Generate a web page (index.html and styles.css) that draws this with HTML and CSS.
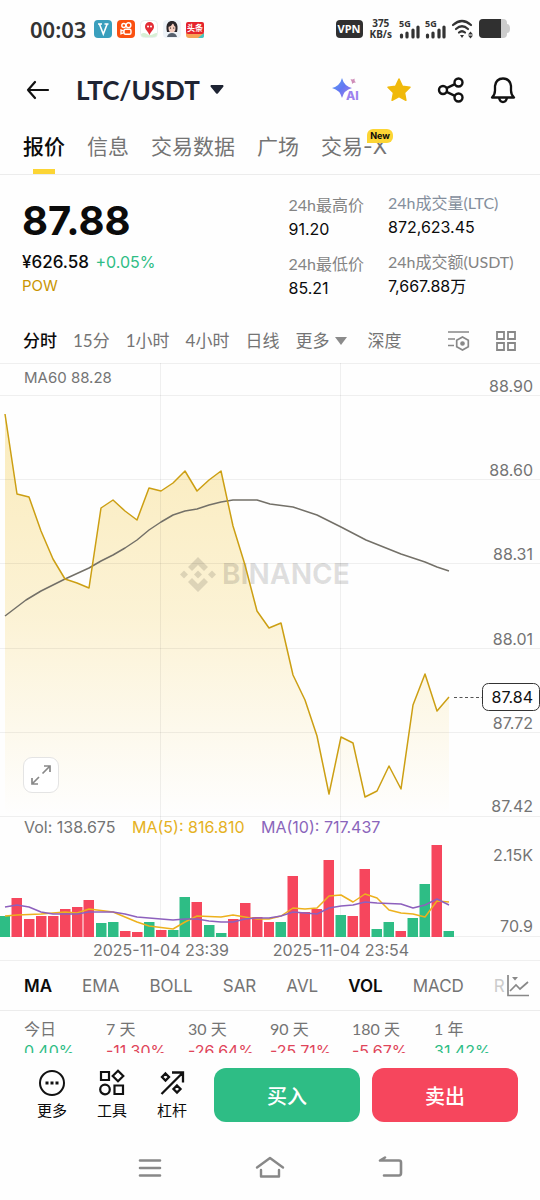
FILE: index.html
```html
<!DOCTYPE html>
<html lang="zh-CN">
<head>
<meta charset="utf-8">
<meta name="viewport" content="width=device-width, initial-scale=1">
<title>LTC/USDT</title>
<link rel="stylesheet" href="styles.css">
</head>
<body>
<div class="status">
  <span class="clock">00:03</span>
  <svg class="app" viewBox="0 0 18 18"><rect width="18" height="18" rx="4" fill="#3a9fbd"/><path d="M4 4h4M10.500 4h4M5.500 4.300l3.800 9.700 3.800-9.700" fill="none" stroke="#fff" stroke-width="1.600"/></svg>
  <svg class="app" viewBox="0 0 18 18"><rect width="18" height="18" rx="4" fill="#fa5010"/><g fill="none" stroke="#fff" stroke-width="1.400"><circle cx="6.800" cy="5.500" r="2"/><circle cx="11.500" cy="5.200" r="2.400"/><rect x="7" y="9.300" width="7" height="5" rx="1.500"/><path d="M7 11.200l-3-1.200v3.800l3-1.200"/></g></svg>
  <svg class="app" viewBox="0 0 18 18"><rect x=".5" y=".5" width="17" height="17" rx="4" fill="#fff" stroke="#e9eeee"/><path d="M1 14c4-3 6 1 9 1s4-2 7-2v1a3 3 0 0 1-3 3H4a3 3 0 0 1-3-3z" fill="#d7efd5"/><path d="M9.500 15C8 11 5 10 5 6.500a4.500 4.500 0 0 1 9 0C14 10 11 11 9.500 15z" fill="#e32d36"/><circle cx="8" cy="6.500" r="1" fill="#fff"/><circle cx="11" cy="6.500" r="1" fill="#fff"/></svg>
  <svg class="app" viewBox="0 0 18 18"><rect width="18" height="18" rx="4" fill="#eef3f8"/><path d="M4 12C2 3 6 1 9 1s7 2 5 11z" fill="#29262b"/><ellipse cx="9" cy="8" rx="3.500" ry="4.500" fill="#f4cdbf"/><path d="M5.300 7Q9 6 10 3q1 3 2.700 4V4L9 2 5.300 4z" fill="#29262b"/><path d="M4 17q1-4 5-4t5 4z" fill="#57606d"/><circle cx="7.500" cy="8" r=".6"/><circle cx="10.700" cy="8" r=".6"/></svg>
  <svg class="app" viewBox="0 0 18 18"><rect width="18" height="18" rx="3" fill="#fff"/><path d="M0 13h18v2a3 3 0 0 1-3 3H3a3 3 0 0 1-3-3z" fill="#f6a257"/><path d="M12 18l6-5v3a2 2 0 0 1-2 2z" fill="#43c6c5"/><rect y="2" width="18" height="12" rx="2" fill="#e5242c"/><text x="9" y="11" class="news">头条</text></svg>
  <span class="vpn">VPN</span>
  <span class="speed"><span>375</span><span>KB/s</span></span>
  <svg class="signal" viewBox="0 0 21 20"><text x="0" y="8" class="five">5G</text><path d="M2.500 18v-2M8 18v-4M14 18v-7M19 18V8" stroke="#333" stroke-width="3.200" stroke-linecap="round"/></svg>
  <svg class="signal" viewBox="0 0 21 20"><text x="0" y="8" class="five">5G</text><path d="M2.500 18v-2M8 18v-4M14 18v-7M19 18V8" stroke="#333" stroke-width="3.200" stroke-linecap="round"/></svg>
  <svg class="wifi" viewBox="0 0 23 20"><g fill="none" stroke="#333" stroke-width="2.200" stroke-linecap="round"><path d="M2 6q9-8 18 0M5 10q6-5.500 12 0M8 13.500q3-2.500 6 0"/></g><path d="M9 16h4l-2 3zM17 15.500h5L19.500 12.500zM17 16.500h5L19.500 19.500z" fill="#333"/></svg>
  <svg class="battery" viewBox="0 0 31 19"><path d="M4 0h20a4 4 0 0 1 4 4v1q3 0 3 4.500T28 14v1a4 4 0 0 1-4 4H4a4 4 0 0 1-4-4V4a4 4 0 0 1 4-4z" fill="#ccc"/><path d="M4 0h18v19H4a4 4 0 0 1-4-4V4a4 4 0 0 1 4-4z" fill="#303030"/></svg>
</div>

<header class="header">
  <button class="plain" aria-label="返回"><svg width="24" height="20" viewBox="0 0 24 20" fill="none" stroke="#111" stroke-width="2.200" stroke-linecap="round" stroke-linejoin="round"><path d="M9 2L2 10l7 8M2 10h20"/></svg></button>
  <button class="plain pair">LTC/USDT <svg width="14" height="9" viewBox="0 0 14 9"><path d="M1 0h12q1 1 .3 1.800L8 8.200q-1 1-2 0L.7 1.800Q0 1 1 0z" fill="#1e2433"/></svg></button>
  <div class="tools">
    <button class="plain" aria-label="AI"><svg width="28" height="26" viewBox="0 0 28 26"><defs><linearGradient id="ai" x1="0" x2="1" y1="0" y2="1"><stop stop-color="#5aa5f4"/><stop offset=".5" stop-color="#6277f2"/><stop offset="1" stop-color="#ae7de9"/></linearGradient></defs><path d="M10 1q2 8 10 10-8 2-10 10-2-8-10-10 8-2 10-10z" fill="url(#ai)"/><path d="M18.500 2q2 1 4-.5-.5 2 1.500 4-2.500-.5-4 1.500 0-2.500-1.500-5z" fill="#cf8db8"/><text x="14" y="23" class="ai-text">AI</text></svg></button>
    <button class="plain" aria-label="收藏"><svg width="26" height="26" viewBox="0 0 26 26"><path d="M13 2l3.400 7.200 7.600 1-5.500 5.400 1.400 7.700L13 19.600l-6.900 3.700 1.400-7.700L2 10.200l7.600-1z" fill="#f0b90b" stroke="#f0b90b" stroke-width="1.500" stroke-linejoin="round"/></svg></button>
    <button class="plain" aria-label="分享"><svg width="26" height="26" viewBox="0 0 26 26" fill="none" stroke="#111" stroke-width="2.400"><circle cx="5" cy="13" r="4"/><circle cx="20.500" cy="5.500" r="4"/><circle cx="20.500" cy="20.500" r="4"/><path d="M8.600 11.200l8.300-4M8.600 14.800l8.300 4"/></svg></button>
    <button class="plain" aria-label="提醒"><svg width="26" height="26" viewBox="0 0 26 26" fill="none" stroke="#111" stroke-width="2.300" stroke-linejoin="round"><path d="M2 20.500q3-3 3-7V9q1-7.500 8-7.500T21 9v4.500q0 4 3 7zM9 21q1 4 4 4t4-4"/></svg></button>
  </div>
</header>

<nav class="tabs">
  <a class="tab active" href="#quote">报价</a>
  <a class="tab" href="#info">信息</a>
  <a class="tab" href="#data">交易数据</a>
  <a class="tab" href="#square">广场</a>
  <a class="tab" href="#tradex">交易-X<span class="new">New</span></a>
</nav>

<main>
<section class="quote" id="quote">
  <div class="price-box">
    <div class="price">87.88</div>
    <div class="fiat">¥626.58 <span class="up">+0.05%</span></div>
    <div class="tag">POW</div>
  </div>
  <dl class="stats">
    <div><dt>24h最高价</dt><dd>91.20</dd></div>
    <div><dt>24h最低价</dt><dd>85.21</dd></div>
  </dl>
  <dl class="stats wide">
    <div><dt class="cool">24h成交量(LTC)</dt><dd>872,623.45</dd></div>
    <div><dt>24h成交额(USDT)</dt><dd>7,667.88万</dd></div>
  </dl>
</section>

<div class="frames">
  <button class="plain active">分时</button>
  <button class="plain">15分</button>
  <button class="plain">1小时</button>
  <button class="plain">4小时</button>
  <button class="plain">日线</button>
  <button class="plain more">更多 <svg width="12" height="8" viewBox="0 0 12 8"><path d="M0 0h12L6 8z" fill="#8b8b8b"/></svg></button>
  <button class="plain">深度</button>
  <div class="frame-tools">
    <button class="plain" aria-label="图表设置"><svg width="22" height="22" viewBox="0 0 22 22" fill="none" stroke="#888" stroke-width="1.700"><path d="M0 2h21M0 9h7M0 15.500h6M14.500 7l5.800 3.200v6.600L14.500 20l-5.800-3.200v-6.600z"/><circle cx="14.500" cy="13.500" r="1.500" fill="#888"/></svg></button>
    <button class="plain" aria-label="布局"><svg width="22" height="22" viewBox="0 0 22 22" fill="none" stroke="#888" stroke-width="1.800"><path d="M2 2h7v7H2zM13 2h7v7h-7zM2 13h7v7H2zM13 13h7v7h-7z"/></svg></button>
  </div>
</div>

<section class="chart-box">
<svg class="chart" viewBox="0 363 540 598" role="img" aria-label="LTC/USDT 分时图">
  <defs><linearGradient id="fill" gradientUnits="userSpaceOnUse" x1="0" y1="414" x2="0" y2="816"><stop stop-color="#f0b90b" stop-opacity=".27"/><stop offset=".5" stop-color="#f0b90b" stop-opacity=".17"/><stop offset="1" stop-color="#f0b90b" stop-opacity="0"/></linearGradient></defs>
  <path d="M5 414L17 494 29 497 41 531 53 559 65 579 77 583 89 588 101 508 113 500 125 511 137 520 149 488 161 491 173 483 185 471 197 491 209 480 221 471 233 526 245 565 257 611 269 628 281 623 293 675 305 700 317 736 329 794 341 737 353 743 365 797 377 791 389 766 401 789 413 705 425 674 437 711 449 697V816H5z" fill="url(#fill)"/>
  <path class="grid" d="M0 363.500H540M0 395.500H540M0 479.500H540M0 563.500H540M0 648.500H540M0 732.500H540M0 816.500H540M0 936.500H540M0 960.500H540M160.500 363V937M340.500 363V937"/>
  <g class="watermark"><path d="M198 557l10 10-4 4-6-6-6 6-4-4zM198 592l10-10-4-4-6 6-6-6-4 4zM184 570.500l4 4-4 4-4-4zM212 570.500l4 4-4 4-4-4zM198 570.500l4 4-4 4-4-4z"/><text x="222" y="584">BINANCE</text></g>
  <path class="ma60" d="M5 616L26 600 41 591 65 579 89 568 101 561 113 555 125 548 137 540 149 530 161 522 173 515 185 511 197 509 209 505 221 502 233 500 257 500 270 504 293 507 317 515 341 527 366 540 401 554 425 562 437 567 449 571"/>
  <path class="line" d="M5 414L17 494 29 497 41 531 53 559 65 579 77 583 89 588 101 508 113 500 125 511 137 520 149 488 161 491 173 483 185 471 197 491 209 480 221 471 233 526 245 565 257 611 269 628 281 623 293 675 305 700 317 736 329 794 341 737 353 743 365 797 377 791 389 766 401 789 413 705 425 674 437 711 449 697"/>
  <path d="M454 697.500H482" stroke="#555" stroke-dasharray="3 2.500"/>
  <text x="24" y="383" class="ma60-text">MA60 88.28</text>
  <g class="axis"><text x="533" y="392">88.90</text><text x="533" y="476">88.60</text><text x="533" y="560">88.31</text><text x="533" y="645">88.01</text><text x="533" y="729">87.72</text><text x="533" y="812">87.42</text><text x="533" y="861">2.15K</text><text x="533" y="932">70.9</text></g>
  <rect x="482.500" y="683.500" width="57" height="27" rx="6" fill="#fff" stroke="#333"/>
  <g class="axis last"><text x="533" y="703">87.84</text></g>
  <text x="24" y="833">Vol: 138.675</text>
  <text x="132" y="833" class="ma5-text">MA(5): 816.810</text>
  <text x="261" y="833" class="ma10-text">MA(10): 717.437</text>
  <path class="green" d="M0 937V916H10V937zM96 937V923h10.500V937zM108 937V922h10.500V937zM144 937V922h10.500V937zM168 937V930h10.500V937zM179.500 937V897h10.500V937zM204 937V925h10.500V937zM216 937V933h10.500V937zM275.500 937V922h10.500V937zM335.500 937V915h10.500V937zM371.500 937V929h10.500V937zM383.500 937V922h10.500V937zM407.500 937V918h10.500V937zM419.500 937V884h10.500V937zM443.500 937V931h10.500V937z"/>
  <path class="red" d="M11.500 937V898H22V937zM24 937V919h10.500V937zM36 937V916h10.500V937zM48 937V916h10.500V937zM60 937V909h10.500V937zM72 937V907h10.500V937zM83.500 937V900H94V937zM120 937V931h10.500V937zM132 937V932h10.500V937zM156 937V930h10.500V937zM191.500 937V902H202V937zM228 937V919h10.500V937zM240 937V903h10.500V937zM252 937V917h10.500V937zM264 937V922h10V937zM287.500 937V876h10.500V937zM299.500 937V912h10.500V937zM311.500 937V909h10.500V937zM323.500 937V860h10.500V937zM347.500 937V916h10.500V937zM359.500 937V869h10.500V937zM395.500 937V931h10.500V937zM431.500 937V845h10.500V937z"/>
  <path class="ma5" d="M5 916L17 915 41 914 65 912 77 913 89 909 113 912 125 917 137 922 149 926 173 929 185 922 197 916 221 917 233 915 245 917 257 919 269 919 281 916 293 908 305 909 317 908 329 896 341 895 353 902 365 894 377 898 389 910 401 913 413 914 425 917 437 901 449 902"/>
  <path class="ma10" d="M5 907L17 905 29 907 41 912 53 914 77 914 89 912 113 912 125 914 137 917 149 918 173 920 185 919 197 919 209 921 221 922 233 922 245 919 257 918 269 918 281 916 293 912 317 914 329 908 341 906 353 905 365 902 377 903 401 904 413 908 425 905 437 899 449 905"/>
  <g class="time"><text x="161" y="956">2025-11-04 23:39</text><text x="341" y="956">2025-11-04 23:54</text></g>
</svg>
<button class="expand" aria-label="全屏"><svg width="22" height="22" viewBox="0 0 22 22" fill="none" stroke="#888" stroke-width="1.700"><path d="M12.500 9.500L20 2M14 2h6v6M9 13l-7 7M2 14v6h6"/></svg></button>
</section>

<div class="indicators">
  <button class="plain active">MA</button>
  <button class="plain">EMA</button>
  <button class="plain">BOLL</button>
  <button class="plain">SAR</button>
  <button class="plain">AVL</button>
  <span class="divider"></span>
  <button class="plain active">VOL</button>
  <button class="plain">MACD</button>
  <button class="plain faded">R</button>
  <button class="plain end" aria-label="指标"><svg width="22" height="22" viewBox="0 0 22 22" fill="none" stroke="#888" stroke-width="1.700"><path d="M1 0v20.500h21M3 16l6-6 4 4 8-7"/><path d="M5 2h6L8 5.500z" fill="#888" stroke="none"/></svg></button>
</div>

<dl class="performance">
  <div><dt>今日</dt><dd class="up">0.40%</dd></div>
  <div><dt>7 天</dt><dd>-11.30%</dd></div>
  <div><dt>30 天</dt><dd>-26.64%</dd></div>
  <div><dt>90 天</dt><dd>-25.71%</dd></div>
  <div><dt>180 天</dt><dd>-5.67%</dd></div>
  <div><dt>1 年</dt><dd class="up">31.42%</dd></div>
</dl>
</main>

<footer class="actions">
  <button class="plain action"><svg width="28" height="28" viewBox="0 0 28 28" fill="none" stroke="#111" stroke-width="2"><circle cx="14" cy="14" r="12"/><path d="M7.500 14h3M12.500 14h3M17.500 14h3" stroke-width="3"/></svg>更多</button>
  <button class="plain action"><svg width="28" height="28" viewBox="0 0 28 28" fill="none" stroke="#111" stroke-width="2.200"><path d="M3 3h8v8H3zM20 1.700L25.300 7 20 12.300 14.700 7zM16.500 16.500h8.500V25h-8.500z"/><circle cx="7" cy="20.500" r="4.800"/></svg>工具</button>
  <button class="plain action"><svg width="28" height="28" viewBox="0 0 28 28" fill="none" stroke="#111" stroke-width="2.300"><path d="M3.500 25L24.500 4M14 3.500h11v10M7.500 4.500L11 8l-3.500 3.500L4 8zM19 16.500l3.500 3.500-3.500 3.500-3.500-3.500z"/></svg>杠杆</button>
  <button class="trade buy">买入</button>
  <button class="trade sell">卖出</button>
</footer>
<div class="system">
  <button class="plain" aria-label="最近任务"><svg width="26" height="24" viewBox="0 0 26 24" stroke="#888" stroke-width="2.600" stroke-linecap="round"><path d="M3 4.500h20M3 12h20M3 19.500h20"/></svg></button>
  <button class="plain" aria-label="主屏幕"><svg width="30" height="24" viewBox="0 0 30 24" fill="none" stroke="#888" stroke-width="2.400" stroke-linecap="round" stroke-linejoin="round"><path d="M2 11.500L15 2l13 9.500M6 14v6.500h18V14"/></svg></button>
  <button class="plain" aria-label="后退"><svg width="26" height="24" viewBox="0 0 26 24" fill="none" stroke="#888" stroke-width="2.600" stroke-linecap="round" stroke-linejoin="round"><path d="M8 1.500L3 4.500h19q2 0 2 2V17q0 2.500-2 2.500H7"/></svg></button>
</div>
</body>
</html>
```
FILE: styles.css
```css
* { box-sizing: border-box; }
body { margin: 0; background: #fefefe; color: #0b0b0b; font-family: Inter, "Noto Sans CJK SC", sans-serif; font-size: 16px; line-height: 20px; }
svg { display: block; flex: none; overflow: visible; }
dl, dd { margin: 0; }
.plain { display: flex; align-items: center; padding: 0; border: 0; background: none; color: inherit; font: inherit; cursor: pointer; white-space: nowrap; }
.up { color: #2ebd85; }

.status { display: flex; align-items: center; gap: 5px; height: 57px; padding: 0 30px; color: #333; }
.clock { margin-right: 3px; font: 600 22px/24px "Noto Sans", sans-serif; }
.app { width: 18px; height: 18px; }
.news { fill: #fff; font: 700 8px "Noto Sans CJK SC", sans-serif; text-anchor: middle; }
.vpn { margin-left: auto; padding: 0 2px; border-radius: 4px; background: #303030; color: #fff; font: 700 11px/18px "Noto Sans", sans-serif; }
.speed { display: flex; flex-direction: column; align-items: center; margin: 0 2px; font: 700 10px/11px "Noto Sans", sans-serif; }
.signal { width: 21px; height: 20px; }
.five { fill: #333; font: 700 9px "Noto Sans", sans-serif; }
.wifi { width: 23px; height: 20px; }
.battery { width: 31px; height: 19px; }

.header { display: flex; align-items: center; gap: 26px; height: 65px; padding: 0 24px 0 26px; }
.pair { gap: 10px; color: #1e2433; font-family: Lato, sans-serif; font-size: 26px; font-weight: 700; line-height: 32px; }
.tools { display: flex; gap: 26px; margin-left: auto; }
.ai-text { fill: #9c82ee; font: 800 12px Inter, sans-serif; }

.tabs { display: flex; gap: 22px; padding: 0 23px; border-bottom: 1px solid #ececec; }
.tab { position: relative; padding: 10px 0 13px; color: #747474; font-size: 21px; line-height: 29px; text-decoration: none; white-space: nowrap; }
.tab.active { color: #0b0b0b; font-weight: 500; }
.tab.active::after { content: ""; position: absolute; left: 50%; bottom: 0; width: 22px; height: 5px; margin-left: -11px; background: #fcd535; }
.new { position: absolute; right: -6px; top: 7px; padding: 0 3px; border-radius: 6px 6px 6px 0; background: #fcd535; color: #0b0b0b; font-size: 9px; font-weight: 700; line-height: 14px; }

.quote { display: flex; padding: 16px 22px 18px; }
.price-box { flex: 1; }
.price { margin: 7px 0 8px; font-size: 40px; font-weight: 700; line-height: 46px; }
.fiat { font-size: 17px; font-weight: 500; line-height: 20px; }
.fiat .up { margin-left: 2px; font-size: 16px; font-weight: 400; }
.tag { margin-top: 4px; color: #c99400; font-size: 15px; line-height: 20px; }
.stats { display: flex; flex-direction: column; gap: 11px; margin-right: 24px; padding-top: 2px; white-space: nowrap; }
.stats.wide { min-width: 130px; margin: 0; padding: 0; }
.stats dt { color: #848484; font-family: Lato, "Noto Sans CJK SC", sans-serif; line-height: 24px; }
.stats dt.cool { color: #848e9c; }
.stats dd { line-height: 24px; }

.frames { display: flex; align-items: center; gap: 16px; height: 45px; padding: 0 23px; color: #747474; font-family: Lato, "Noto Sans CJK SC", sans-serif; font-size: 17px; line-height: 24px; }
.frames .active { color: #0b0b0b; font-weight: 500; }
.more { gap: 6px; margin-right: 4px; }
.frame-tools { display: flex; gap: 25px; margin-left: auto; }

.chart-box { position: relative; }
.chart { width: 100%; height: auto; font-family: Inter, sans-serif; font-size: 16px; fill: #747474; }
.grid { fill: none; stroke: #000; stroke-opacity: .06; }
.watermark { fill: #000; fill-opacity: .12; font-size: 28px; font-weight: 700; }
.line, .ma60, .ma5, .ma10 { fill: none; stroke-width: 1.5px; stroke-linejoin: round; }
.line { stroke: #cc9f13; }
.ma60 { stroke: #737068; }
.ma5 { stroke: #edb11d; }
.ma10 { stroke: #8d60bd; }
.axis { text-anchor: end; }
.last { fill: #111; }
.time { text-anchor: middle; }
.ma60-text { font-size: 15px; }
.ma5-text { fill: #e5b122; }
.ma10-text { fill: #8a65bb; }
.green { fill: #2ebd85; }
.red { fill: #f6465d; }
.expand { position: absolute; left: 23px; bottom: 168px; display: flex; align-items: center; justify-content: center; width: 36px; height: 36px; padding: 0; border: 1px solid #e4e4e4; border-radius: 9px; background: #fff; }

.indicators { display: flex; align-items: center; gap: 30px; height: 50px; padding: 0 12px 0 24px; border-bottom: 1px solid #ececec; color: #747474; font-size: 17px; }
.indicators .active { color: #0b0b0b; font-weight: 600; }
.divider { width: 1px; height: 18px; margin: 0 -15px; background: #e4e4e4; }
.faded { color: #ccc; }
.indicators .end { margin-left: -28px; background: #fefefe; }

.performance { display: grid; grid-template-columns: repeat(6, 1fr); height: 42px; padding: 7px 24px 0; overflow: hidden; white-space: nowrap; }
.performance dt { color: #747474; font-family: Lato, "Noto Sans CJK SC", sans-serif; line-height: 22px; }
.performance dd { color: #e0455a; line-height: 22px; }
.performance dd.up { color: #2ebd85; }

.actions { display: flex; align-items: center; padding: 15px 22px 13px; }
.action { flex-direction: column; width: 60px; gap: 3px; font-size: 15px; line-height: 22px; }
.trade { flex: 1; height: 54px; border: 0; border-radius: 12px; color: #fff; font: 500 20px "Noto Sans CJK SC", sans-serif; }
.buy { margin: 0 12px; background: #2ebd85; }
.sell { background: #f6465d; }
.system { display: flex; justify-content: center; gap: 92px; padding: 21px 0 19px; }
```
